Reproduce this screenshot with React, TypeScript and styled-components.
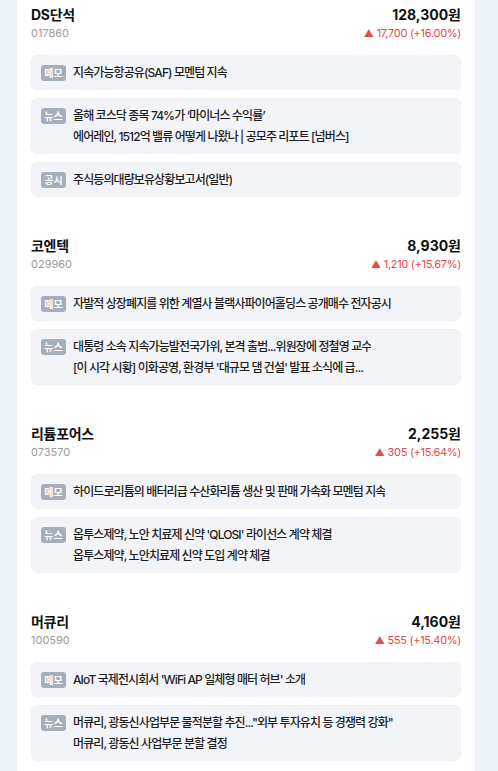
import React from "react";
import styled, { createGlobalStyle } from "styled-components";

const GlobalStyle = createGlobalStyle`
  html, body {
    margin: 0;
    padding: 0;
    background: #eef2f9;
  }
  body {
    font-family: Inter, "Noto Sans CJK KR", sans-serif;
    -webkit-font-smoothing: antialiased;
  }
`;

type Kind = "memo" | "news" | "notice";

interface Note {
  kind: Kind;
  lines: string[];
}

interface Stock {
  name: string;
  code: string;
  price: string;
  change: string;
  notes: Note[];
}

const stocks: Stock[] = [
  {
    name: "DS단석",
    code: "017860",
    price: "128,300원",
    change: "17,700 (+16.00%)",
    notes: [
      { kind: "memo", lines: ["지속가능항공유(SAF) 모멘텀 지속"] },
      {
        kind: "news",
        lines: [
          "올해 코스닥 종목 74%가 ‘마이너스 수익률’",
          "에어레인, 1512억 밸류 어떻게 나왔나 | 공모주 리포트 [넘버스]",
        ],
      },
      { kind: "notice", lines: ["주식등의대량보유상황보고서(일반)"] },
    ],
  },
  {
    name: "코엔텍",
    code: "029960",
    price: "8,930원",
    change: "1,210 (+15.67%)",
    notes: [
      { kind: "memo", lines: ["자발적 상장폐지를 위한 계열사 블랙사파이어홀딩스 공개매수 전자공시"] },
      {
        kind: "news",
        lines: [
          "대통령 소속 지속가능발전국가위, 본격 출범...위원장에 정철영 교수",
          "[이 시각 시황] 이화공영, 환경부 '대규모 댐 건설' 발표 소식에 급...",
        ],
      },
    ],
  },
  {
    name: "리튬포어스",
    code: "073570",
    price: "2,255원",
    change: "305 (+15.64%)",
    notes: [
      { kind: "memo", lines: ["하이드로리튬의 배터리급 수산화리튬 생산 및 판매 가속화 모멘텀 지속"] },
      {
        kind: "news",
        lines: [
          "옵투스제약, 노안 치료제 신약 'QLOSI' 라이선스 계약 체결",
          "옵투스제약, 노안치료제 신약 도입 계약 체결",
        ],
      },
    ],
  },
  {
    name: "머큐리",
    code: "100590",
    price: "4,160원",
    change: "555 (+15.40%)",
    notes: [
      { kind: "memo", lines: ["AIoT 국제전시회서 'WiFi AP 일체형 매터 허브' 소개"] },
      {
        kind: "news",
        lines: [
          "머큐리, 광동신사업부문 물적분할 추진...\"외부 투자유치 등 경쟁력 강화\"",
          "머큐리, 광동신 사업부문 분할 결정",
        ],
      },
    ],
  },
];

const kindLabel: Record<Kind, string> = {
  memo: "메모",
  news: "뉴스",
  notice: "공시",
};

const Page = styled.div`
  display: flex;
  justify-content: center;
  padding: 0 17px 0 17px;
  min-height: 100vh;
  box-sizing: border-box;
  width: 492px;
`;

const Panel = styled.div`
  flex: 1;
  background: #ffffff;
  padding: 5px 14px 20px 14px;
  display: flex;
  flex-direction: column;
  gap: 39px;
`;

const Section = styled.section`
  display: flex;
  flex-direction: column;
`;

const Header = styled.div`
  display: flex;
  justify-content: space-between;
  align-items: flex-start;
  height: 50px;
`;

const NameCol = styled.div`
  display: flex;
  flex-direction: column;
`;

const PriceCol = styled.div`
  display: flex;
  flex-direction: column;
  align-items: flex-end;
`;

const Name = styled.div`
  font-size: 14px;
  line-height: 20px;
  font-weight: 700;
  color: #111111;
  letter-spacing: -0.3px;
`;

const Price = styled(Name)`
  letter-spacing: 0;
`;

const Code = styled.div`
  font-size: 11px;
  line-height: 15px;
  color: #9b9b9b;
  margin-top: 1px;
`;

const Change = styled.div`
  font-size: 11px;
  line-height: 15px;
  color: #e5484d;
  margin-top: 1px;
  letter-spacing: -0.3px;

  &::before {
    content: "▲";
    font-size: 10px;
    margin-right: 3px;
  }
`;

const Notes = styled.div`
  display: flex;
  flex-direction: column;
  gap: 8px;
`;

const NoteBox = styled.div`
  display: flex;
  align-items: flex-start;
  gap: 7px;
  background: #f3f4f7;
  border: 1px solid #f0f1f4;
  border-radius: 6px;
  padding: 7px 9px;
`;

const Badge = styled.span`
  flex: none;
  width: 25px;
  height: 16px;
  margin-top: 2px;
  border-radius: 3px;
  background: #a6adbb;
  color: #ffffff;
  font-size: 10px;
  line-height: 16px;
  text-align: center;
  font-weight: 600;
`;

const Lines = styled.div`
  display: flex;
  flex-direction: column;
  gap: 2px;
  min-width: 0;
`;

const Line = styled.div`
  font-size: 12px;
  line-height: 19px;
  font-weight: 500;
  color: #1e1e1e;
  letter-spacing: -0.9px;
  white-space: nowrap;
  overflow: hidden;
  text-overflow: ellipsis;
`;

const StockSection = ({ stock }: { stock: Stock }) => (
  <Section>
    <Header>
      <NameCol>
        <Name>{stock.name}</Name>
        <Code>{stock.code}</Code>
      </NameCol>
      <PriceCol>
        <Price>{stock.price}</Price>
        <Change>{stock.change}</Change>
      </PriceCol>
    </Header>
    <Notes>
      {stock.notes.map((note) => (
        <NoteBox key={note.kind}>
          <Badge>{kindLabel[note.kind]}</Badge>
          <Lines>
            {note.lines.map((line) => (
              <Line key={line}>{line}</Line>
            ))}
          </Lines>
        </NoteBox>
      ))}
    </Notes>
  </Section>
);

const App = () => (
  <>
    <GlobalStyle />
    <Page>
      <Panel>
        {stocks.map((stock) => (
          <StockSection key={stock.code} stock={stock} />
        ))}
      </Panel>
    </Page>
  </>
);

export default App;
